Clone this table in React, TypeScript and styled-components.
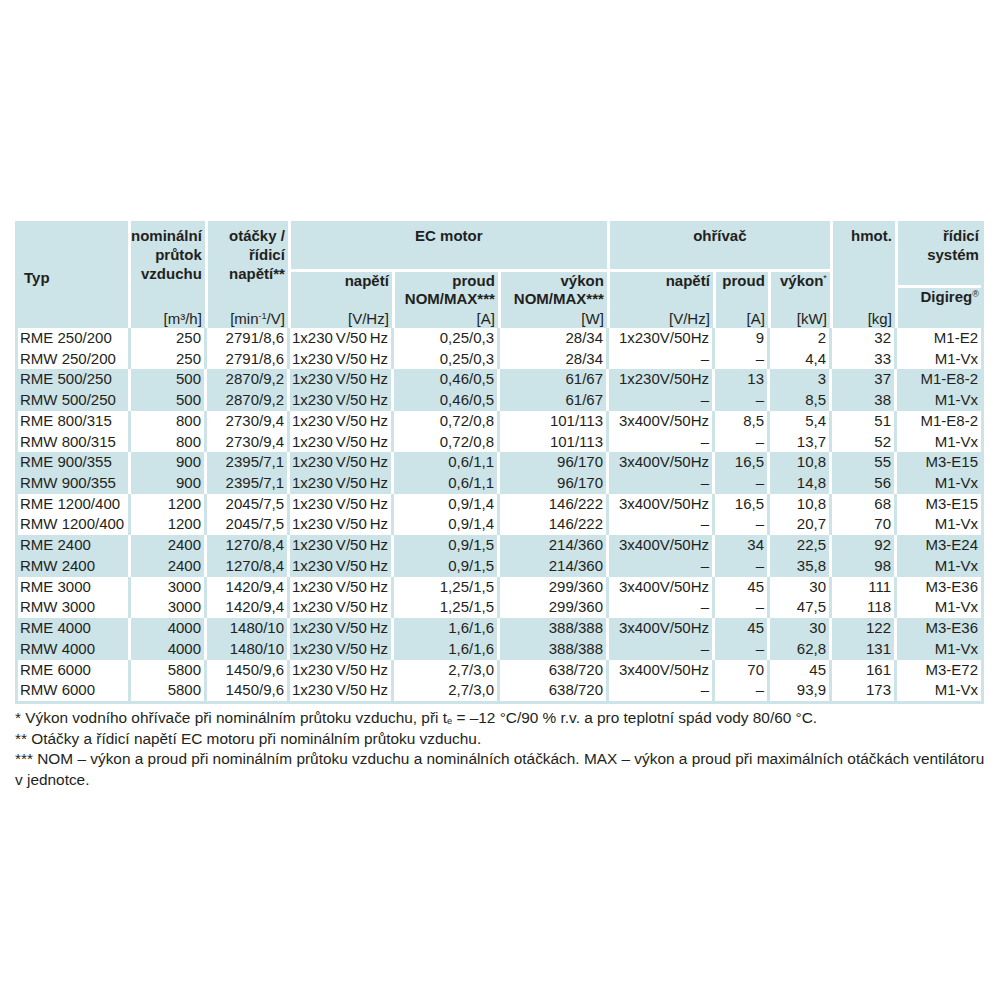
import React from 'react';
import styled, { createGlobalStyle } from 'styled-components';

const BLUE = '#cce3e7';
const INK = '#231f20';

const GlobalStyle = createGlobalStyle`
  html, body { margin: 0; padding: 0; background: #fff; }
  body {
    font-family: "Liberation Sans", Arial, Helvetica, sans-serif;
    color: ${INK};
  }
`;

const COLS = [110, 73, 80, 101, 103, 106, 103, 52, 59, 62, 84];

const Page = styled.div`
  padding: 221px 0 0 15px;
  width: 969px;
`;

/* ---------- header ---------- */
const HeaderBar = styled.div`
  display: flex;
  gap: 3px;
  height: 107px;
  background: #fff;
  border-left: 3px solid ${BLUE};
  border-right: 3px solid ${BLUE};
  font-size: 15px;
  font-weight: bold;
  line-height: 19px;
`;

const HeadCell = styled.div<{ $w?: number; $top?: number; $typ?: boolean }>`
  ${(p) => (p.$w ? `flex: 0 0 ${p.$w}px;` : 'flex: 1 1 0;')}
  box-sizing: border-box;
  background: ${BLUE};
  display: flex;
  flex-direction: column;
  justify-content: ${(p) => (p.$typ ? 'center' : 'space-between')};
  text-align: ${(p) => (p.$typ ? 'left' : 'right')};
  padding: ${(p) => p.$top ?? 5}px 3px 0 ${(p) => (p.$typ ? 6 : 0)}px;
  white-space: nowrap;
`;

const SubLabel = styled.div`
  line-height: 18px;
`;

const Unit = styled.div`
  font-weight: normal;
  font-size: 15px;
  line-height: 18px;
`;

const Sup = styled.sup`
  font-size: 0.6em;
  line-height: 0;
  vertical-align: 0.55em;
  font-weight: normal;
`;

const HeadGroup = styled.div<{ $w: number }>`
  flex: 0 0 ${(p) => p.$w}px;
  display: flex;
  flex-direction: column;
  gap: 3px;
`;

const GroupTitle = styled.div<{ $h: number; $align: 'center' | 'right' }>`
  flex: 0 0 ${(p) => p.$h}px;
  box-sizing: border-box;
  background: ${BLUE};
  text-align: ${(p) => p.$align};
  padding: 5px 3px 0;
  white-space: nowrap;
`;

const SubRow = styled.div`
  flex: 1 1 0;
  display: flex;
  gap: 3px;
`;

/* ---------- body ---------- */
const Body = styled.div`
  border-bottom: 3px solid ${BLUE};
`;

const Row = styled.div<{ $band: boolean }>`
  display: grid;
  grid-template-columns: ${COLS.map((c) => `${c}px`).join(' ')};
  column-gap: 3px;
  background: ${(p) => (p.$band ? '#fff' : BLUE)};
  border-left: 3px solid ${BLUE};
  border-right: 3px solid ${BLUE};
`;

const Cell = styled.div<{ $band: boolean; $first?: boolean }>`
  background: ${(p) => (p.$band ? BLUE : '#fff')};
  height: 20.72px;
  line-height: 20.72px;
  font-size: 15px;
  padding: ${(p) => (p.$first ? '0 2px 0 2px' : '0 3px 0 2px')};
  text-align: ${(p) => (p.$first ? 'left' : 'right')};
  white-space: nowrap;
  overflow: visible;
`;

/* ---------- notes ---------- */
const Notes = styled.div`
  margin-top: 4px;
  font-size: 15.4px;
  line-height: 20.7px;
  white-space: nowrap;
`;

const Sub = styled.sub`
  font-size: 0.6em;
  line-height: 0;
  vertical-align: -0.1em;
`;

const T = '\u2009';
const EC = `1x230${T}V/50${T}Hz`;

const ROWS: string[][] = [
  ['RME 250/200', '250', '2791/8,6', EC, '0,25/0,3', '28/34', '1x230V/50Hz', '9', '2', '32', 'M1-E2'],
  ['RMW 250/200', '250', '2791/8,6', EC, '0,25/0,3', '28/34', '–', '–', '4,4', '33', 'M1-Vx'],
  ['RME 500/250', '500', '2870/9,2', EC, '0,46/0,5', '61/67', '1x230V/50Hz', '13', '3', '37', 'M1-E8-2'],
  ['RMW 500/250', '500', '2870/9,2', EC, '0,46/0,5', '61/67', '–', '–', '8,5', '38', 'M1-Vx'],
  ['RME 800/315', '800', '2730/9,4', EC, '0,72/0,8', '101/113', '3x400V/50Hz', '8,5', '5,4', '51', 'M1-E8-2'],
  ['RMW 800/315', '800', '2730/9,4', EC, '0,72/0,8', '101/113', '–', '–', '13,7', '52', 'M1-Vx'],
  ['RME 900/355', '900', '2395/7,1', EC, '0,6/1,1', '96/170', '3x400V/50Hz', '16,5', '10,8', '55', 'M3-E15'],
  ['RMW 900/355', '900', '2395/7,1', EC, '0,6/1,1', '96/170', '–', '–', '14,8', '56', 'M1-Vx'],
  ['RME 1200/400', '1200', '2045/7,5', EC, '0,9/1,4', '146/222', '3x400V/50Hz', '16,5', '10,8', '68', 'M3-E15'],
  ['RMW 1200/400', '1200', '2045/7,5', EC, '0,9/1,4', '146/222', '–', '–', '20,7', '70', 'M1-Vx'],
  ['RME 2400', '2400', '1270/8,4', EC, '0,9/1,5', '214/360', '3x400V/50Hz', '34', '22,5', '92', 'M3-E24'],
  ['RMW 2400', '2400', '1270/8,4', EC, '0,9/1,5', '214/360', '–', '–', '35,8', '98', 'M1-Vx'],
  ['RME 3000', '3000', '1420/9,4', EC, '1,25/1,5', '299/360', '3x400V/50Hz', '45', '30', '111', 'M3-E36'],
  ['RMW 3000', '3000', '1420/9,4', EC, '1,25/1,5', '299/360', '–', '–', '47,5', '118', 'M1-Vx'],
  ['RME 4000', '4000', '1480/10', EC, '1,6/1,6', '388/388', '3x400V/50Hz', '45', '30', '122', 'M3-E36'],
  ['RMW 4000', '4000', '1480/10', EC, '1,6/1,6', '388/388', '–', '–', '62,8', '131', 'M1-Vx'],
  ['RME 6000', '5800', '1450/9,6', EC, '2,7/3,0', '638/720', '3x400V/50Hz', '70', '45', '161', 'M3-E72'],
  ['RMW 6000', '5800', '1450/9,6', EC, '2,7/3,0', '638/720', '–', '–', '93,9', '173', 'M1-Vx'],
];

export default function App() {
  const ecW = COLS[3] + COLS[4] + COLS[5] + 6;
  const heatW = COLS[6] + COLS[7] + COLS[8] + 6;
  return (
    <Page>
      <GlobalStyle />
      <HeaderBar>
        <HeadCell $w={COLS[0]} $typ>Typ</HeadCell>
        <HeadCell $w={COLS[1]}>
          <div>
            nominální
            <br />
            průtok
            <br />
            vzduchu
          </div>
          <Unit>[m³/h]</Unit>
        </HeadCell>
        <HeadCell $w={COLS[2]}>
          <div>
            otáčky /
            <br />
            řídicí
            <br />
            napětí**
          </div>
          <Unit>
            [min<Sup>-1</Sup>/V]
          </Unit>
        </HeadCell>
        <HeadGroup $w={ecW}>
          <GroupTitle $h={48} $align="center">EC motor</GroupTitle>
          <SubRow>
            <HeadCell $w={COLS[3]} $top={0}>
              <SubLabel>napětí</SubLabel>
              <Unit>[V/Hz]</Unit>
            </HeadCell>
            <HeadCell $w={COLS[4]} $top={0}>
              <SubLabel>
                proud
                <br />
                NOM/MAX***
              </SubLabel>
              <Unit>[A]</Unit>
            </HeadCell>
            <HeadCell $w={COLS[5]} $top={0}>
              <SubLabel>
                výkon
                <br />
                NOM/MAX***
              </SubLabel>
              <Unit>[W]</Unit>
            </HeadCell>
          </SubRow>
        </HeadGroup>
        <HeadGroup $w={heatW}>
          <GroupTitle $h={48} $align="center">ohřívač</GroupTitle>
          <SubRow>
            <HeadCell $w={COLS[6]} $top={0}>
              <SubLabel>napětí</SubLabel>
              <Unit>[V/Hz]</Unit>
            </HeadCell>
            <HeadCell $w={COLS[7]} $top={0}>
              <SubLabel>proud</SubLabel>
              <Unit>[A]</Unit>
            </HeadCell>
            <HeadCell $w={COLS[8]} $top={0}>
              <SubLabel>
                výkon<Sup>*</Sup>
              </SubLabel>
              <Unit>[kW]</Unit>
            </HeadCell>
          </SubRow>
        </HeadGroup>
        <HeadCell $w={COLS[9]}>
          <div>hmot.</div>
          <Unit>[kg]</Unit>
        </HeadCell>
        <HeadGroup $w={COLS[10]}>
          <GroupTitle $h={64} $align="right">
            řídicí
            <br />
            systém
          </GroupTitle>
          <SubRow>
            <HeadCell $top={0}>
              <SubLabel>
                Digireg<Sup>®</Sup>
              </SubLabel>
            </HeadCell>
          </SubRow>
        </HeadGroup>
      </HeaderBar>
      <Body>
        {ROWS.map((r, i) => {
          const band = Math.floor(i / 2) % 2 === 1;
          return (
            <Row key={i} $band={band}>
              {r.map((v, j) => (
                <Cell key={j} $band={band} $first={j === 0}>
                  {v}
                </Cell>
              ))}
            </Row>
          );
        })}
      </Body>
      <Notes>
        * Výkon vodního ohřívače při nominálním průtoku vzduchu, při t<Sub>e</Sub> = –12 °C/90 % r.v. a pro
        teplotní spád vody 80/60 °C.
        <br />
        ** Otáčky a řídicí napětí EC motoru při nominálním průtoku vzduchu.
        <br />
        *** NOM – výkon a proud při nominálním průtoku vzduchu a nominálních otáčkách. MAX – výkon a proud
        při maximálních otáčkách ventilátoru
        <br />
        v jednotce.
      </Notes>
    </Page>
  );
}
